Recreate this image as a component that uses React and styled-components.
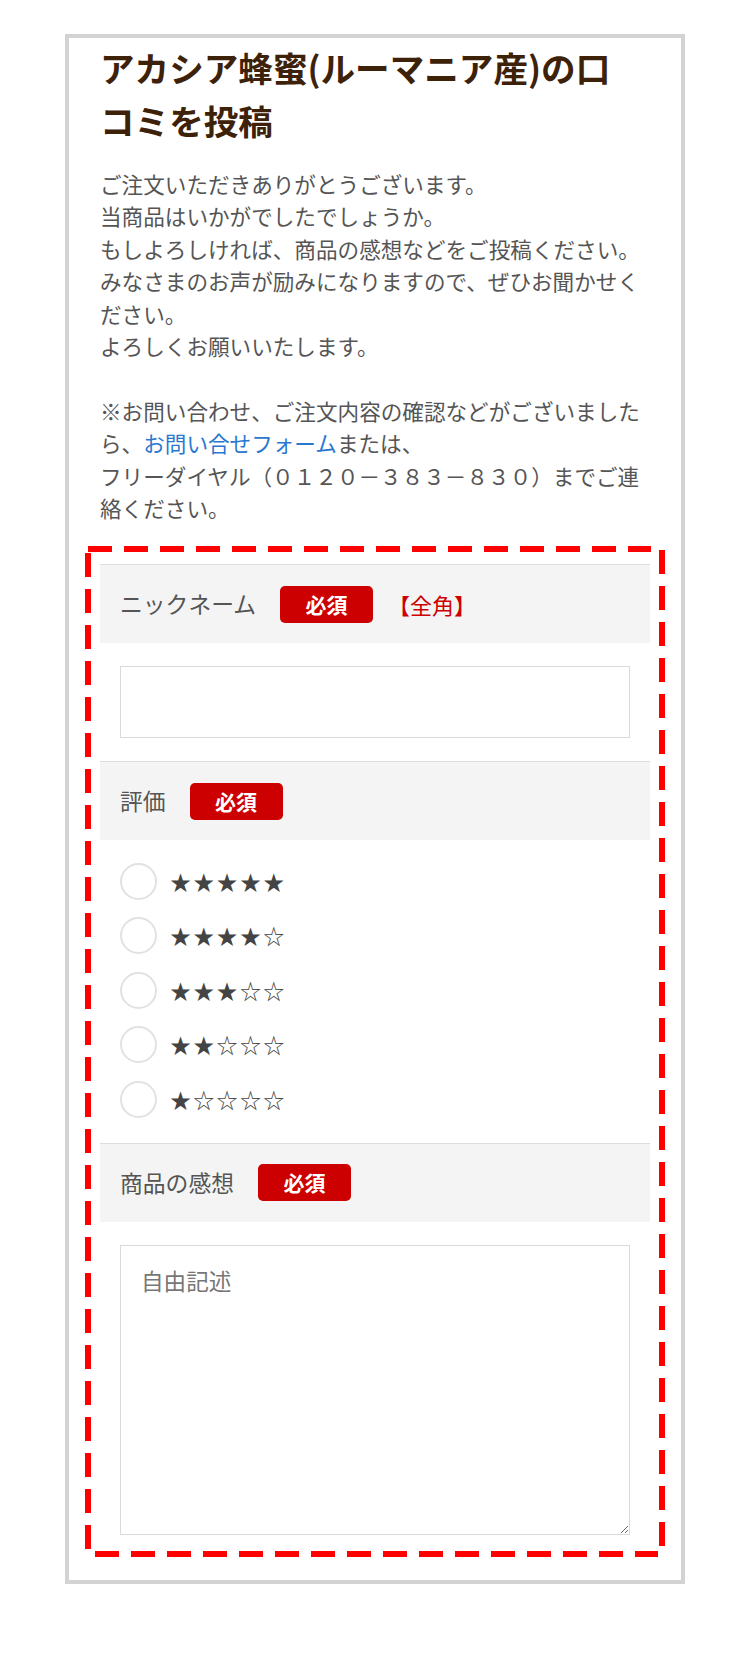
import React from "react"
import styled, { createGlobalStyle } from "styled-components"

const GlobalStyle = createGlobalStyle`
  html, body {
    margin: 0;
    padding: 0;
    background: #ffffff;
  }
  body {
    font-family: "Noto Sans CJK JP", "Noto Sans", sans-serif;
    color: #555555;
  }
  *, *::before, *::after {
    box-sizing: border-box;
  }
`

const Page = styled.div`
  padding: 34px 0 84px;
`

const Panel = styled.section`
  width: 620px;
  margin: 0 auto;
  padding: 3px 31px 23px;
  border: 4px solid #d3d3d3;
  background: #ffffff;
`

const Title = styled.h1`
  margin: 0;
  font-size: 34.6px;
  line-height: 53px;
  font-weight: 700;
  color: #3d2209;
`

const Intro = styled.p`
  margin: 21px 0 0;
  font-size: 21.6px;
  line-height: 32.4px;
  color: #555555;
`

const InquiryLink = styled.a`
  color: #2a77d0;
  text-decoration: none;
`

// red dashed marker drawn round the form
const hDash = "repeating-linear-gradient(90deg, #ff0000 0 24px, transparent 24px 36px)"
const vDash = "repeating-linear-gradient(180deg, #ff0000 0 24px, transparent 24px 36px)"

const FormFrame = styled.form`
  margin: 22px -15px 0;
  padding: 18px 15px 22px;
  background:
    ${hDash} 3px 0 / calc(100% - 17px) 6px no-repeat,
    ${hDash} 10px 100% / calc(100% - 17px) 6px no-repeat,
    ${vDash} 0 7px / 6px calc(100% - 15px) no-repeat,
    ${vDash} 100% 4px / 6px calc(100% - 15px) no-repeat;
`

const FieldHead = styled.div`
  display: flex;
  align-items: center;
  padding: 20.5px 20px;
  border-top: 1px solid #dddddd;
  background: #f4f4f4;
`

const FieldLabel = styled.span`
  margin-right: 24px;
  font-size: 22.8px;
  line-height: 1;
  color: #555555;
`

const Required = styled.span`
  display: inline-flex;
  align-items: center;
  justify-content: center;
  width: 93px;
  height: 37px;
  border-radius: 5px;
  background: #cc0000;
  color: #ffffff;
  font-size: 21px;
  font-weight: 700;
  line-height: 1;
`

const Note = styled.span`
  margin-left: 15px;
  font-size: 22px;
  line-height: 1;
  color: #cc0000;
`

const FieldBody = styled.div`
  padding: ${p => p.$pad || "23px 20px 23px"};
`

const TextInput = styled.input`
  display: block;
  width: 100%;
  height: 72px;
  margin: 0;
  padding: 0 20px;
  border: 1px solid #dadada;
  border-radius: 0;
  background: #ffffff;
  font-family: inherit;
  font-size: 22.6px;
  color: #555555;
  outline: none;
`

const RadioList = styled.div`
  display: flex;
  flex-direction: column;
  gap: 17.5px;
  padding: 22.5px 20px 25px;
`

const RadioRow = styled.label`
  display: flex;
  align-items: center;
  height: 37px;
`

const RadioDot = styled.input.attrs({ type: "radio" })`
  appearance: none;
  -webkit-appearance: none;
  flex: none;
  width: 37px;
  height: 37px;
  margin: 0;
  border: 2px solid #e2e2e2;
  border-radius: 50%;
  background: #ffffff;
`

const Stars = styled.span`
  margin-left: 13px;
  font-size: 21px;
  letter-spacing: 2.3px;
  line-height: 1;
  color: #444444;
`

const FreeText = styled.textarea`
  display: block;
  width: 100%;
  height: 290px;
  margin: 0;
  padding: 20px;
  border: 1px solid #dadada;
  border-radius: 0;
  background: #ffffff;
  font-family: inherit;
  font-size: 22.6px;
  line-height: 30px;
  color: #555555;
  outline: none;
  &::placeholder {
    color: #777777;
  }
`

const ratings = ["★★★★★", "★★★★☆", "★★★☆☆", "★★☆☆☆", "★☆☆☆☆"]

const App = () => {
  return (
    <Page>
      <GlobalStyle />
      <Panel>
        <Title>
          アカシア蜂蜜(ルーマニア産)の口
          <br />
          コミを投稿
        </Title>
        <Intro>
          ご注文いただきありがとうございます。
          <br />
          当商品はいかがでしたでしょうか。
          <br />
          もしよろしければ、商品の感想などをご投稿ください。
          <br />
          みなさまのお声が励みになりますので、ぜひお聞かせください。
          <br />
          よろしくお願いいたします。
          <br />
          <br />
          ※お問い合わせ、ご注文内容の確認などがございましたら、
          <InquiryLink href="#">お問い合せフォーム</InquiryLink>
          または、
          <br />
          フリーダイヤル（０１２０－３８３－８３０）までご連絡ください。
        </Intro>
        <FormFrame onSubmit={e => e.preventDefault()}>
          <FieldHead>
            <FieldLabel>ニックネーム</FieldLabel>
            <Required>必須</Required>
            <Note>【全角】</Note>
          </FieldHead>
          <FieldBody>
            <TextInput type="text" name="nickname" />
          </FieldBody>

          <FieldHead>
            <FieldLabel>評価</FieldLabel>
            <Required>必須</Required>
          </FieldHead>
          <RadioList>
            {ratings.map((stars, i) => (
              <RadioRow key={stars}>
                <RadioDot name="rating" value={5 - i} />
                <Stars>{stars}</Stars>
              </RadioRow>
            ))}
          </RadioList>

          <FieldHead>
            <FieldLabel>商品の感想</FieldLabel>
            <Required>必須</Required>
          </FieldHead>
          <FieldBody $pad="23px 20px 0">
            <FreeText name="comment" placeholder="自由記述" />
          </FieldBody>
        </FormFrame>
      </Panel>
    </Page>
  )
}

export default App
